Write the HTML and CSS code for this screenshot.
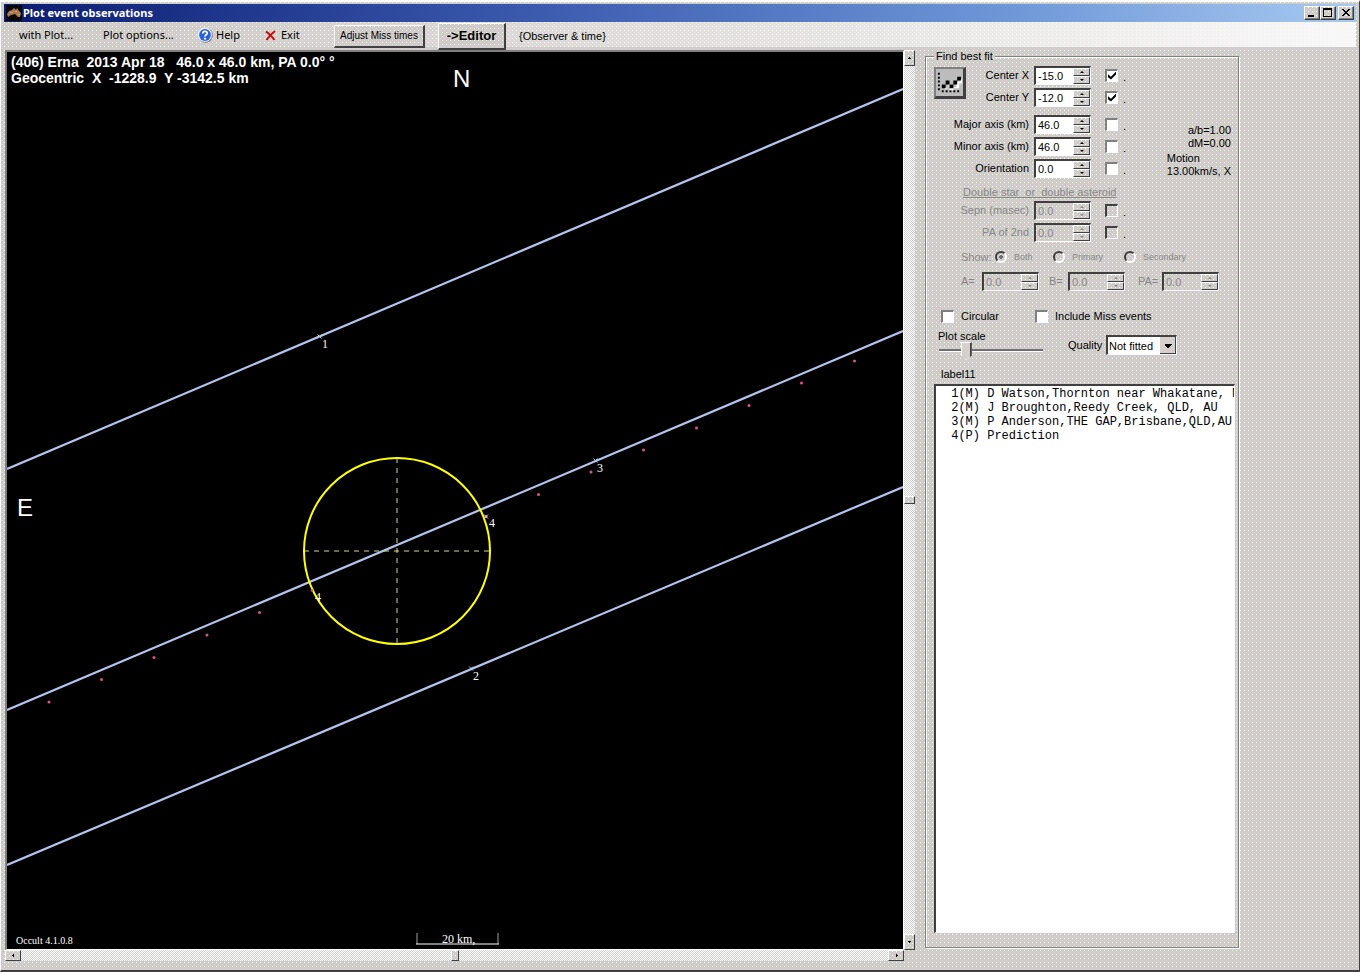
FILE: index.html
```html
<!DOCTYPE html>
<html lang="en">
<head>
<meta charset="utf-8">
<title>Plot event observations</title>
<link rel="stylesheet" href="styles.css">
</head>
<body>
<div class="window">
  <header class="titlebar">
    <svg class="app-icon" viewBox="0 0 16 16" aria-hidden="true"><rect width="16" height="16" fill="#080808"/><path d="M1 9 L3 6 L6 5 L8 3 L10 5 L11 3 L13 6 L15 8 L14 12 L12 12 L9 9 L5 10 L2 12 Z" fill="#a87850"/><path d="M4 7h3v1H4zM9 6h2v1H9zM12 9h2v1h-2z" fill="#d0a078"/></svg>
    <h1 class="title">Plot event observations</h1>
    <button class="win-btn" type="button" aria-label="Minimize"><svg viewBox="0 0 12 10"><path d="M2 7h6v2H2z"/></svg></button>
    <button class="win-btn" type="button" aria-label="Maximize"><svg viewBox="0 0 12 10"><path fill-rule="evenodd" d="M1 0h9v9H1zM2 2v6h7V2z"/></svg></button>
    <button class="win-btn win-close" type="button" aria-label="Close"><svg viewBox="0 0 12 10"><path d="M2 1h2v1h1v1h2V2h1V1h2v1H9v1H8v1H7v1h1v1h1v1h1v1H8V7H7V6H5v1H4v1H2V7h1V6h1V5h1V4H4V3H3V2H2z"/></svg></button>
  </header>

  <nav class="toolbar">
    <button class="menu menu-plot" type="button">with Plot...</button>
    <button class="menu menu-options" type="button">Plot options...</button>
    <button class="menu menu-help" type="button"><svg class="icon-help" viewBox="0 0 16 16"><circle cx="8.500" cy="8.500" r="7.300" fill="#777"/><circle cx="7.800" cy="7.800" r="7.200" fill="#e8f0fc"/><circle cx="8" cy="8" r="5.900" fill="#2c62d8"/><path d="M5.800 6.400C5.800 3.700 10.200 3.700 10.200 6.200C10.200 7.800 8 7.800 8 9.600" fill="none" stroke="#fff" stroke-width="1.700"/><rect x="7" y="10.700" width="2" height="1.800" fill="#fff"/></svg>Help</button>
    <button class="menu menu-exit" type="button"><svg class="icon-exit" viewBox="0 0 11 11"><path d="M1 1.500 Q5 4 9.500 10M10 1 Q5 5 1.500 10" fill="none" stroke="#c80808" stroke-width="1.900"/></svg>Exit</button>
    <button class="raised btn-adjust" type="button">Adjust Miss times</button>
    <button class="raised btn-editor" type="button">-&gt;Editor</button>
    <span class="hint">{Observer &amp; time}</span>
  </nav>

  <main class="content">
    <section class="viewer">
      <svg class="plot" viewBox="7 52 896 896" preserveAspectRatio="xMinYMin meet" role="img" aria-label="Occultation chords">
        <g class="chords">
          <path d="M7 469L903 89M7 710L903 331M7 865L903 487"/>
        </g>
        <path class="axes" d="M304 551H490M397 458V644"/>
        <circle class="limb" cx="397" cy="551" r="93"/>
        <g class="track">
          <circle cx="49" cy="702" r="1.500"/><circle cx="101.500" cy="679.500" r="1.500"/><circle cx="154" cy="657.500" r="1.500"/><circle cx="207" cy="635" r="1.500"/><circle cx="259.500" cy="612.500" r="1.500"/><circle cx="312" cy="590.500" r="1.200"/>
          <circle cx="538.500" cy="494.500" r="1.500"/><circle cx="591" cy="472" r="1.500"/><circle cx="643.500" cy="450" r="1.500"/><circle cx="696.500" cy="428" r="1.500"/><circle cx="749" cy="405.500" r="1.500"/><circle cx="801.500" cy="383" r="1.500"/><circle cx="854.500" cy="361" r="1.500"/>
        </g>
        <path class="marks" d="M317.500 334.500l4 4M321.500 334.500l-4 4M593.500 458.500l4 4M597.500 458.500l-4 4M469 666.500l4 4M473 666.500l-4 4M484 514.500l4 4M488 514.500l-4 4"/>
        <circle class="event" cx="486" cy="516.500" r="1.500"/>
        <g class="chord-no">
          <text x="322" y="348">1</text><text x="597" y="472">3</text><text x="489" y="527">4</text><text x="315" y="601">4</text><text x="473" y="680">2</text>
        </g>
        <text class="heading" x="11" y="67">(406) Erna  2013 Apr 18   46.0 x 46.0 km, PA 0.0° °</text>
        <text class="heading" x="11" y="83">Geocentric  X  -1228.9  Y -3142.5 km</text>
        <text class="compass" x="453" y="87">N</text>
        <text class="compass" x="17" y="516">E</text>
        <text class="version" x="16" y="944">Occult 4.1.0.8</text>
        <text class="scale-text" x="442" y="943">20 km,</text>
        <path class="scale-ends" d="M417 933V944M498 933V944"/>
        <path class="scale-bar" d="M416 944H499"/>
      </svg>
      <div class="scroll scroll-v">
        <button type="button" aria-label="Scroll up"><svg viewBox="0 0 5 5"><path d="M2 1h1v1h1v1H1V2h1z"/></svg></button>
        <span class="thumb"></span>
        <button type="button" aria-label="Scroll down"><svg viewBox="0 0 5 5"><path d="M1 1h3v1H3v1H2V2H1z"/></svg></button>
      </div>
      <div class="scroll scroll-h">
        <button type="button" aria-label="Scroll left"><svg viewBox="0 0 5 5"><path d="M3 1v3H2V3H1V2h1V1z"/></svg></button>
        <span class="thumb"></span>
        <button type="button" aria-label="Scroll right"><svg viewBox="0 0 5 5"><path d="M2 1v3h1V3h1V2H3V1z"/></svg></button>
      </div>
    </section>

    <fieldset class="fit">
      <legend>Find best fit</legend>
      <div class="params">
        <button class="fit-btn" type="button" aria-label="Fit"><svg viewBox="0 0 28 28"><path fill="#000" d="M2 4h2v2H2zM2 8h2v2H2zM2 12h2v2H2zM2 16h2v2H2zM2 20h2v2H2zM6 22h2v2H6zM10 22h2v2h-2zM14 22h2v2h-2zM18 22h2v2h-2zM22 22h2v2h-2z"/><path fill="#fff" d="M9 19h4v-3h4v3h4v-6h4v-3h2v5h-3v5h-6v2h-4v-3h-3v2H9z"/><path fill="#000" d="M6 16h4v4H6zM10 12h4v4h-4zM14 16h4v4h-4zM18 12h4v4h-4zM22 8h4v4h-4z"/></svg></button>

        <label class="r1" for="cx">Center X</label>
        <span class="spin r1"><input id="cx" type="text" value="-15.0"><span class="steps"><button type="button" aria-label="Increase"></button><button type="button" aria-label="Decrease"></button></span></span>
        <input class="tick r1" type="checkbox" aria-label="Fit center X" checked><span class="dot r1">.</span>

        <label class="r2" for="cy">Center Y</label>
        <span class="spin r2"><input id="cy" type="text" value="-12.0"><span class="steps"><button type="button" aria-label="Increase"></button><button type="button" aria-label="Decrease"></button></span></span>
        <input class="tick r2" type="checkbox" aria-label="Fit center Y" checked><span class="dot r2">.</span>

        <label class="r4" for="maj">Major axis (km)</label>
        <span class="spin r4"><input id="maj" type="text" value="46.0"><span class="steps"><button type="button" aria-label="Increase"></button><button type="button" aria-label="Decrease"></button></span></span>
        <input class="tick r4" type="checkbox" aria-label="Fit major axis"><span class="dot r4">.</span>

        <label class="r5" for="min">Minor axis (km)</label>
        <span class="spin r5"><input id="min" type="text" value="46.0"><span class="steps"><button type="button" aria-label="Increase"></button><button type="button" aria-label="Decrease"></button></span></span>
        <input class="tick r5" type="checkbox" aria-label="Fit minor axis"><span class="dot r5">.</span>

        <label class="r6" for="ori">Orientation</label>
        <span class="spin r6"><input id="ori" type="text" value="0.0"><span class="steps"><button type="button" aria-label="Increase"></button><button type="button" aria-label="Decrease"></button></span></span>
        <input class="tick r6" type="checkbox" aria-label="Fit orientation"><span class="dot r6">.</span>

        <div class="results">
          <p class="right">a/b=1.00</p>
          <p class="right">dM=0.00</p>
          <p class="motion">Motion</p>
          <p>13.00km/s, X</p>
        </div>

        <p class="subhead">Double star  or  double asteroid</p>

        <label class="r8 off" for="sep">Sepn (masec)</label>
        <span class="spin r8"><input id="sep" type="text" value="0.0" disabled><span class="steps"><button type="button" aria-label="Increase" disabled></button><button type="button" aria-label="Decrease" disabled></button></span></span>
        <input class="tick r8" type="checkbox" aria-label="Fit separation" disabled><span class="dot r8">.</span>

        <label class="r9 off" for="pa2">PA of 2nd</label>
        <span class="spin r9"><input id="pa2" type="text" value="0.0" disabled><span class="steps"><button type="button" aria-label="Increase" disabled></button><button type="button" aria-label="Decrease" disabled></button></span></span>
        <input class="tick r9" type="checkbox" aria-label="Fit position angle" disabled><span class="dot r9">.</span>
      </div>

      <div class="show off">
        <span>Show:</span>
        <label><input type="radio" name="show" checked disabled>Both</label>
        <label><input type="radio" name="show" disabled>Primary</label>
        <label><input type="radio" name="show" disabled>Secondary</label>
      </div>

      <div class="second off">
        <label for="a">A=</label>
        <span class="spin"><input id="a" type="text" value="0.0" disabled><span class="steps"><button type="button" aria-label="Increase" disabled></button><button type="button" aria-label="Decrease" disabled></button></span></span>
        <label for="b">B=</label>
        <span class="spin"><input id="b" type="text" value="0.0" disabled><span class="steps"><button type="button" aria-label="Increase" disabled></button><button type="button" aria-label="Decrease" disabled></button></span></span>
        <label for="pa">PA=</label>
        <span class="spin"><input id="pa" type="text" value="0.0" disabled><span class="steps"><button type="button" aria-label="Increase" disabled></button><button type="button" aria-label="Decrease" disabled></button></span></span>
      </div>

      <div class="options">
        <label><input class="tick" type="checkbox">Circular</label>
        <label><input class="tick" type="checkbox">Include Miss events</label>
      </div>

      <div class="adjust">
        <div class="zoom">
          <label for="scale">Plot scale</label>
          <input id="scale" class="slider" type="range" min="0" max="100" value="24">
        </div>
        <label for="quality">Quality</label>
        <select id="quality" class="combo"><option>Not fitted</option></select>
      </div>

      <label class="list-label" for="list">label11</label>
      <select id="list" class="list" size="4">
        <option>&nbsp;1(M) D Watson,Thornton near Whakatane, NZ</option>
        <option>&nbsp;2(M) J Broughton,Reedy Creek, QLD, AU</option>
        <option>&nbsp;3(M) P Anderson,THE GAP,Brisbane,QLD,AU</option>
        <option>&nbsp;4(P) Prediction</option>
      </select>
    </fieldset>
  </main>
</div>
</body>
</html>
```

FILE: styles.css
```css
:root {
  --shade: #808080;
  --dark: #404040;
  --muted: #888888;
}

* { box-sizing: border-box; }

body {
  margin: 0;
  font: 11px/14px "Liberation Sans", Arial, sans-serif;
  color: #000;
}

/* Dithered face colour: yellow and pink dots over grey */
.window, .fit legend, .raised, .win-btn, .thumb, .scroll button, .steps button {
  background-color: #cccccc;
  background-image:
    conic-gradient(from 0deg at 3px 1px, #ffffcc 25%, transparent 0),
    conic-gradient(from 0deg at 3px 1px, #ffcccc 25%, transparent 0);
  background-size: 4px 4px;
  background-position: 0 0, 2px 2px;
}

button, input, select { font: inherit; color: inherit; margin: 0; }
button { padding: 0; }
p { margin: 0; }

.window {
  min-height: 100vh;
  display: flex;
  flex-direction: column;
  padding: 2px 3px 9px 3px;
  border: 1px solid #fff;
  border-top-width: 2px;
  border-right-color: var(--dark);
  border-bottom: 2px solid var(--dark);
}

/* Title bar */
.titlebar {
  display: flex;
  align-items: center;
  height: 18px;
  padding: 0 2px;
  background: linear-gradient(90deg, #0a1c72, #3c5cb0 40%, #7098d8 75%, #a6caf0);
}
.app-icon { width: 16px; height: 16px; margin-right: 1px; }
.title {
  flex: 1;
  margin: 0;
  color: #fff;
  font: bold 11px/16px "Noto Sans", "Open Sans", sans-serif;
}
.win-btn {
  display: grid;
  place-items: center;
  width: 16px;
  height: 14px;
  border: 1px solid #fff;
  border-right-color: var(--dark);
  border-bottom-color: var(--dark);
  box-shadow: inset -1px -1px 0 var(--shade);
}
.win-btn svg { width: 12px; height: 10px; }
.win-close { margin-left: 2px; }

/* Toolbar */
.toolbar {
  display: flex;
  align-items: center;
  height: 28px;
  padding-left: 15px;
  background: linear-gradient(90deg, rgba(255,255,255,0) 10%, rgba(255,255,255,.85)) 0 0 / 100% 25px no-repeat;
}
.menu {
  display: flex;
  align-items: center;
  padding-bottom: 2px;
  border: 0;
  background: none;
  font: 11px/16px "Noto Sans", "Open Sans", sans-serif;
}
.menu-plot { width: 84px; }
.menu-options { width: 94px; }
.menu-help { width: 68px; gap: 3px; }
.menu-exit { width: 69px; gap: 5px; }
.icon-help { width: 16px; height: 16px; }
.icon-exit { width: 11px; height: 11px; }
.raised {
  border: 1px solid #fff;
  border-right: 2px solid var(--dark);
  border-bottom: 2px solid var(--dark);
}
.btn-adjust { width: 91px; height: 23px; font-size: 10px; margin-right: 13px; }
.btn-editor {
  width: 68px;
  height: 27px;
  font: bold 13px/16px "Liberation Sans", Arial, sans-serif;
}
.hint { margin-left: 13px; }

.content {
  flex: 1;
  display: flex;
  gap: 10px;
  padding-right: 117px;
}

/* Plot and its scroll bars */
.viewer {
  flex: 1;
  min-width: 0;
  display: grid;
  grid-template-columns: 1fr 11px;
  grid-template-rows: 1fr 11px;
  padding-left: 1px;
}
.plot {
  display: block;
  width: 100%;
  height: 100%;
  background: #000;
  border: 2px solid var(--shade);
  border-right: 1px solid #fff;
  border-bottom: 1px solid #fff;
}
.plot text { fill: #fff; white-space: pre; }
.chords { stroke: #b4c4ec; stroke-width: 2.2; }
.axes { stroke: #d8d890; stroke-width: 1; stroke-dasharray: 5 5; fill: none; }
.limb { fill: none; stroke: #ffff00; stroke-width: 2; }
.track { fill: #e0508c; }
.event { fill: #f0a0d0; }
.marks { stroke: #b8c8dc; stroke-width: 1; }
.chord-no { font: 12px "Liberation Serif", serif; }
.heading { font: bold 14px "Liberation Sans", Arial, sans-serif; }
.compass { font: 24px "Liberation Sans", Arial, sans-serif; }
.version { font: 10px "Liberation Serif", serif; }
.scale-text { font: 12px "Liberation Serif", serif; }
.scale-ends { stroke: #a0a0a0; }
.scale-bar { stroke: #fff; }

.scroll {
  display: flex;
  justify-content: space-between;
  background: conic-gradient(#fff 25%, #d0d0cc 0 50%, #fff 0 75%, #d0d0cc 0) 0 0 / 2px 2px;
}
.scroll-v { flex-direction: column; }
.scroll button, .thumb {
  display: grid;
  place-items: center;
  border: 1px solid #fff;
  border-right-color: var(--dark);
  border-bottom-color: var(--dark);
}
.scroll button { width: 16px; height: 11px; }
.scroll-v button { width: 11px; height: 16px; }
.scroll svg { width: 5px; height: 5px; }
.thumb { width: 8px; height: 11px; }
.scroll-v .thumb { width: 11px; height: 8px; }

/* Fit panel */
.fit {
  flex: none;
  width: 314px;
  min-width: 0;
  display: flex;
  flex-direction: column;
  margin: 0 0 13px;
  padding: 1px 3px 14px 8px;
  border: 1px solid var(--shade);
  box-shadow: 1px 1px 0 #fff, inset 1px 1px 0 #fff;
}
.fit legend { padding: 0 2px; line-height: 13px; }
.off, .subhead { color: var(--muted); }

.params {
  display: grid;
  grid-template-columns: 95px 57px 22px 14px 1fr;
  grid-template-rows: 22px 22px 5px 22px 22px 22px 20px 22px 22px;
  column-gap: 5px;
  align-items: center;
}
.params > label { grid-column: 1; justify-self: end; }
.params > .spin { grid-column: 2; }
.params > .tick { grid-column: 3; justify-self: end; }
.params > .dot { grid-column: 4; justify-self: start; padding-top: 3px; }
.r1 { grid-row: 1; }
.r2 { grid-row: 2; }
.r4 { grid-row: 4; }
.r5 { grid-row: 5; }
.r6 { grid-row: 6; }
.r8 { grid-row: 8; }
.r9 { grid-row: 9; }

.fit-btn {
  grid-area: 1 / 1 / 3 / 2;
  width: 32px;
  height: 32px;
  align-self: start;
  margin-top: 3px;
  background: #bcbcbc;
  border: 2px solid var(--shade);
  border-right: 3px solid var(--dark);
  border-bottom: 3px solid var(--dark);
}
.fit-btn svg { display: block; width: 100%; height: 100%; }

.spin {
  display: flex;
  width: 57px;
  height: 19px;
  border: 2px solid var(--dark);
  border-right: 1px solid #fff;
  border-bottom: 1px solid #fff;
}
.spin input {
  flex: 1;
  min-width: 0;
  padding: 0 2px;
  border: 0;
  background: #fff;
}
.spin input:disabled { color: var(--muted); background: none; }
.steps { display: flex; flex-direction: column; width: 17px; }
.steps button {
  flex: 1;
  display: grid;
  place-items: center;
  min-height: 0;
  border: 1px solid #fff;
  border-right-color: var(--dark);
  border-bottom-color: var(--dark);
}
.steps button::before {
  content: "";
  border: 2px solid transparent;
  border-top-width: 0;
  border-bottom: 2px solid #000;
}
.steps button:last-child::before {
  border-bottom-width: 0;
  border-top: 2px solid #000;
}
.steps button:disabled::before { border-bottom-color: var(--muted); }
.steps button:last-child:disabled::before { border-top-color: var(--muted); }

.tick {
  appearance: none;
  display: grid;
  place-items: center;
  width: 13px;
  height: 13px;
  background: #fff;
  border: 2px solid var(--shade);
  border-right: 1px solid #fff;
  border-bottom: 1px solid #fff;
}
.tick:disabled { background: none; border-top-color: var(--dark); border-left-color: var(--dark); }
.tick:checked::before {
  content: "";
  width: 8px;
  height: 8px;
  background: #000;
  clip-path: polygon(0 35%, 37% 65%, 100% 0, 100% 38%, 37% 100%, 0 72%);
}

.results {
  grid-area: 4 / 5 / 7 / 6;
  justify-self: end;
  align-self: end;
  padding: 0 4px 1px 0;
  line-height: 13px;
  white-space: nowrap;
}
.right { text-align: right; }
.motion { margin-top: 2px; }

.subhead {
  grid-area: 7 / 1 / 8 / 6;
  align-self: end;
  padding-left: 29px;
  text-decoration: underline;
  white-space: pre;
}

.show { display: flex; align-items: center; height: 28px; padding-left: 27px; }
.show span { width: 34px; }
.show label { display: flex; align-items: center; gap: 7px; width: 58px; font-size: 9px; }
.show label + label { width: 71px; }
.show input {
  appearance: none;
  width: 12px;
  height: 12px;
  border: 2px solid var(--dark);
  border-right-color: #fff;
  border-bottom-color: #fff;
  border-radius: 50%;
}
.show input:checked { background: radial-gradient(circle, #707070 2px, transparent 2px); }

.second { display: flex; align-items: center; height: 20px; padding-left: 27px; }
.second label { width: 21px; }
.second .spin { margin-right: 10px; }
.second label:nth-of-type(2) { width: 19px; }
.second label:nth-of-type(3) { width: 24px; margin-left: 3px; }

.options { display: flex; margin-top: 16px; height: 18px; padding-left: 7px; }
.options label { display: flex; align-items: center; gap: 7px; }
.options label:first-child { width: 94px; }

.adjust { display: flex; align-items: center; margin-top: 4px; height: 32px; }
.zoom { display: flex; flex-direction: column; width: 110px; margin-right: 24px; padding-left: 4px; }
.zoom label { line-height: 12px; }
.adjust > label { width: 38px; }
.slider {
  appearance: none;
  width: 106px;
  height: 18px;
  margin: 0;
  background: linear-gradient(#707070 2px, #fff 2px) 1px 7px / 104px 3px no-repeat;
}
.slider::-webkit-slider-thumb {
  appearance: none;
  width: 11px;
  height: 18px;
  background: #d6d0cc;
  border: 1px solid #fff;
  border-right: 2px solid var(--dark);
  clip-path: polygon(0 0, 100% 0, 100% 75%, 50% 100%, 0 75%);
}
.combo {
  appearance: none;
  width: 71px;
  height: 20px;
  padding: 0 0 0 1px;
  border: 2px solid var(--dark);
  border-right: 1px solid #fff;
  border-bottom: 1px solid #fff;
  border-radius: 0;
  background:
    conic-gradient(from 315deg at 50% 100%, #000 90deg, transparent 0) right 4px top 7px / 8px 4px no-repeat,
    linear-gradient(var(--dark), var(--dark)) right 0 bottom 0 / 16px 1px no-repeat,
    linear-gradient(var(--dark), var(--dark)) right 0 top 0 / 1px 100% no-repeat,
    linear-gradient(#d6d0cc, #d6d0cc) right 0 top 0 / 16px 100% no-repeat,
    #fff;
}

.list-label { margin: 6px 0 3px 7px; }
.list {
  flex: 1;
  width: 301px;
  padding: 1px 0;
  overflow: hidden;
  border: 2px solid var(--dark);
  border-right: 1px solid #fff;
  border-bottom: 1px solid #fff;
  border-radius: 0;
  background: #fff;
  font: 12px/14px "Liberation Mono", "Courier New", monospace;
}
.list option { min-height: 14px; padding: 0 0 0 8px; }
```
